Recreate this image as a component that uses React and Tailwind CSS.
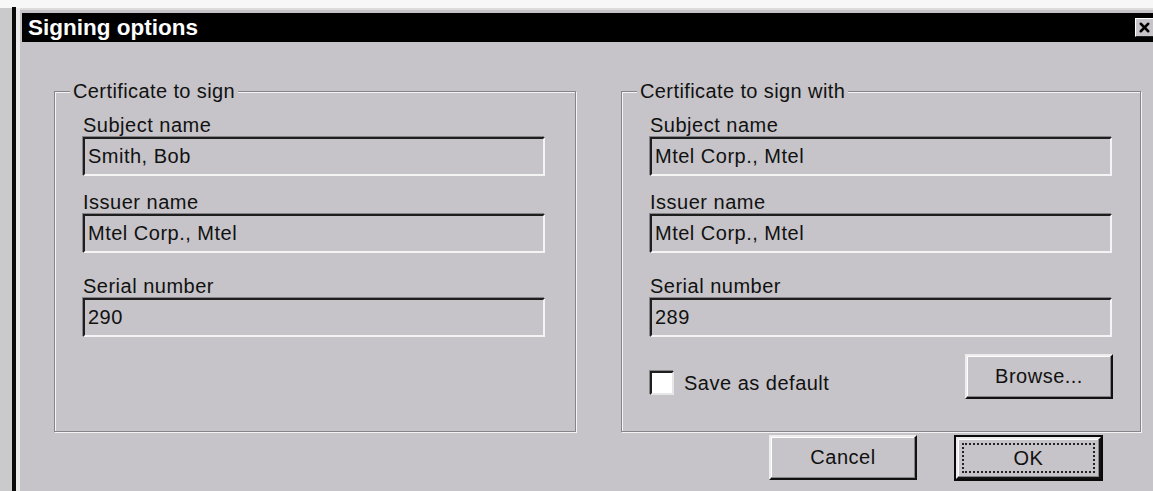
import React from 'react';
import { X } from 'lucide-react';

const FONT = { fontFamily: '"Liberation Sans", Arial, sans-serif' };

const Field = ({ value }) => (
  <div className="flex h-[39px] w-[462px] items-center border-2 border-t-[#1e1e1e] border-l-[#1e1e1e] border-r-[#f4f4f4] border-b-[#f4f4f4] bg-[#c6c4c8] pl-[3px] text-[20px] leading-[23px] tracking-[0.5px] text-[#111] shadow-[-1px_-1px_0_#858489]">
    {value}
  </div>
);

const Label = ({ children, className = '' }) => (
  <div className={`text-[20px] leading-[23px] tracking-[0.5px] text-[#111] ${className}`}>{children}</div>
);

const Group = ({ title, width, children }) => (
  <div
    className={`relative flex h-[341px] ${width} flex-col border border-[#858489] pt-[22px] pl-[28px] shadow-[inset_1px_1px_0_#f4f4f4,1px_1px_0_#f4f4f4]`}
  >
    <span className="absolute -top-[12px] left-[15px] bg-[#c6c4c8] px-[3px] text-[20px] leading-[23px] tracking-[0.4px] text-[#111]">
      {title}
    </span>
    {children}
  </div>
);

const Button = ({ children, className = '' }) => (
  <button
    className={`flex items-center justify-center border-2 border-t-[#ededed] border-l-[#ededed] border-r-[#111] border-b-[#111] bg-[#c6c4c8] text-[20px] leading-[23px] tracking-[0.5px] text-[#111] shadow-[inset_-1px_-1px_0_#858489,inset_1px_1px_0_#fff] ${className}`}
  >
    {children}
  </button>
);

const CertFields = ({ subject, issuer, serial }) => (
  <>
    <Label>Subject name</Label>
    <Field value={subject} />
    <Label className="mt-[15px]">Issuer name</Label>
    <Field value={issuer} />
    <Label className="mt-[22px]">Serial number</Label>
    <Field value={serial} />
  </>
);

export default function App() {
  return (
    <div className="flex h-[491px] w-[1153px] overflow-hidden bg-[#c6c4c8]" style={FONT}>
      {/* window frame on the left */}
      <div className="flex w-[12px] flex-col">
        <div className="h-[8px] bg-[#f7f7f7]" />
        <div className="flex-1 bg-[#cac9cc]" />
      </div>
      <div className="flex w-[4px] flex-col">
        <div className="h-[7px] bg-[#f7f7f7]" />
        <div className="flex-1 bg-[#0a0a0a]" />
      </div>
      <div className="flex w-[4px] flex-col">
        <div className="h-[8px] bg-[#f7f7f7]" />
        <div className="flex-1 bg-[#ebebec]" />
      </div>

      <div className="flex flex-1 flex-col">
        <div className="h-[8px] bg-[#f7f7f7]" />
        <div className="h-[2px] bg-[#dcdcdd]" />
        <div className="h-[3px]" />

        {/* title bar */}
        <div className="ml-[2px] -mr-[8px] flex h-[29px] items-center justify-between bg-black pl-[6px] pr-[2px]">
          <span className="text-[22.5px] font-bold leading-[26px] text-white">Signing options</span>
          <div className="flex h-[19px] w-[24px] items-center justify-center border border-t-white border-l-white border-r-[#222] border-b-[#222] bg-[#c6c4c8]">
            <X size={15} strokeWidth={4} className="-ml-[6px] text-black" />
          </div>
        </div>

        {/* group boxes */}
        <div className="flex gap-[45px] pt-[49px] pl-[34px]">
          <Group title="Certificate to sign" width="w-[522px]">
            <CertFields subject="Smith, Bob" issuer="Mtel Corp., Mtel" serial="290" />
          </Group>

          <Group title="Certificate to sign with" width="w-[520px]">
            <CertFields subject="Mtel Corp., Mtel" issuer="Mtel Corp., Mtel" serial="289" />
            <div className="mt-[17px] flex w-[462px] items-start justify-between">
              <label className="mt-[17px] flex items-center gap-[10px] text-[20px] leading-[23px] tracking-[0.5px] text-[#111]">
                <span className="h-[24px] w-[24px] border-2 border-t-[#1e1e1e] border-l-[#1e1e1e] border-r-[#e6e6e6] border-b-[#e6e6e6] bg-white shadow-[-1px_-1px_0_#858489]" />
                Save as default
              </label>
              <Button className="-mr-[1px] h-[45px] w-[148px]">Browse...</Button>
            </div>
          </Group>
        </div>

        {/* dialog buttons */}
        <div className="mt-[3px] flex justify-end gap-[37px] pr-[50px]">
          <Button className="h-[45px] w-[148px]">Cancel</Button>
          <div className="border-2 border-[#0a0a0a]">
            <Button className="h-[42px] w-[145px]">
              <span className="flex h-[30px] w-[133px] items-center justify-center border-2 border-dotted border-[#222]">
                OK
              </span>
            </Button>
          </div>
        </div>
      </div>
    </div>
  );
}
